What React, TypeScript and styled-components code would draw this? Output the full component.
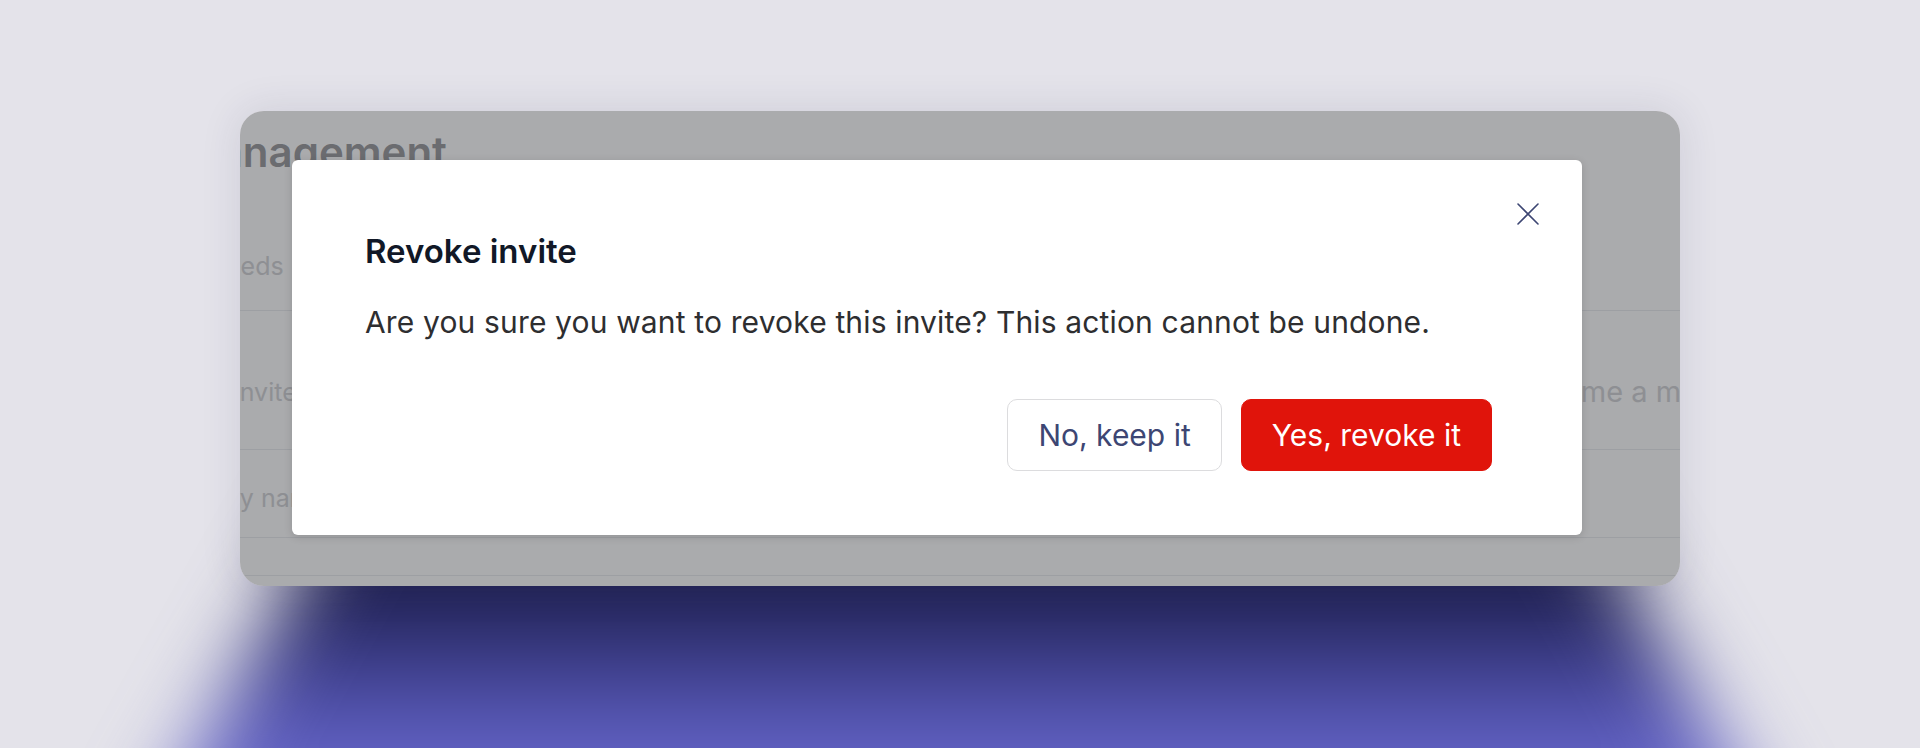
import styled, { createGlobalStyle } from "styled-components";

const GlobalStyle = createGlobalStyle`
  html, body {
    margin: 0;
    padding: 0;
  }
  body {
    background: #e4e3ea;
    font-family: Inter, "Noto Sans", "Liberation Sans", sans-serif;
    -webkit-font-smoothing: antialiased;
  }
  * {
    box-sizing: border-box;
  }
`;

const Stage = styled.div`
  position: relative;
  width: 1920px;
  height: 748px;
  overflow: hidden;
  display: flex;
  justify-content: center;
  align-items: flex-start;
  padding-top: 111px;
  background: #e4e3ea;
`;

// blurred indigo glow that sits behind the window
const Glow = styled.div`
  position: absolute;
  inset: 0;
  filter: blur(40px);
  pointer-events: none;
`;

const GlowShape = styled.div`
  position: absolute;
  top: 380px;
  bottom: -100px;
  left: 0;
  right: 0;
  clip-path: polygon(405px 0, 1515px 0, 1776px 100%, 144px 100%);
  background: linear-gradient(
    180deg,
    #17183c 0%,
    #1e1f4d 44%,
    #3e3f8e 61%,
    #6262c4 79%,
    #6b6bd0 100%
  );
`;

const Window = styled.div`
  position: relative;
  z-index: 1;
  width: 1440px;
  height: 475px;
  border-radius: 24px;
  overflow: hidden;
  background: #ffffff;
  box-shadow: 0 0 40px rgba(40, 40, 80, 0.12);
`;

const Page = styled.div`
  display: flex;
  flex-direction: column;
  padding-top: 16px;
`;

const PageTitle = styled.h1`
  margin: 0 0 0 -60px;
  font-size: 42px;
  line-height: 50px;
  font-weight: 600;
  color: #a1a1a4;
  white-space: nowrap;
`;

const Tabs = styled.div`
  display: flex;
  gap: 40px;
  margin-top: 73px;
  padding-bottom: 28px;
  border-bottom: 1px solid #ecedf0;
`;

const Tab = styled.span<{ $shift?: number }>`
  margin-left: ${(p) => (p.$shift ? `${p.$shift}px` : "0")};
  font-size: 25px;
  line-height: 32px;
  color: #d5d6d9;
  white-space: nowrap;
`;

const Row = styled.div<{ $top: number; $bottom: number }>`
  display: flex;
  align-items: center;
  padding: ${(p) => p.$top}px 0 ${(p) => p.$bottom}px;
  border-bottom: 1px solid #ecedf0;
  white-space: nowrap;
`;

const Cell = styled.span<{ $shift: number; $basis?: number }>`
  flex: 0 0 ${(p) => (p.$basis ? `${p.$basis}px` : "auto")};
  margin-left: ${(p) => p.$shift}px;
  font-size: 25px;
  line-height: 32px;
  color: #d5d6d9;
`;

const Hint = styled.span`
  flex: none;
  font-size: 29px;
  line-height: 32px;
  color: #d5d6d9;
`;

const Spacer = styled.div`
  height: 38px;
  border-bottom: 1px solid #ecedf0;
`;

const Overlay = styled.div`
  position: absolute;
  inset: 0;
  background: rgba(0, 2, 8, 0.335);
`;

const Dialog = styled.div`
  position: absolute;
  left: 52px;
  top: 49px;
  width: 1290px;
  padding: 71px 90px 64px 73px;
  background: #ffffff;
  border-radius: 6px;
  box-shadow: 0 2px 8px rgba(0, 0, 0, 0.14);
`;

const CloseButton = styled.button`
  position: absolute;
  top: 41px;
  right: 42px;
  width: 25px;
  height: 25px;
  padding: 0;
  border: none;
  background: transparent;
  display: flex;
  align-items: center;
  justify-content: center;
  cursor: pointer;
  color: #3d4673;
`;

const Title = styled.h2`
  margin: 0;
  font-size: 33px;
  line-height: 40px;
  font-weight: 600;
  color: #111827;
`;

const Message = styled.p`
  margin: 32px 0 0;
  font-size: 30px;
  line-height: 38px;
  letter-spacing: 0.15px;
  color: #2e2e30;
`;

const Footer = styled.div`
  display: flex;
  justify-content: flex-end;
  gap: 19px;
  margin-top: 58px;
`;

const Button = styled.button<{ $variant: "secondary" | "danger" }>`
  height: 72px;
  padding: 0 30px;
  border-radius: 10px;
  font-family: inherit;
  font-size: 30px;
  font-weight: 400;
  cursor: pointer;
  border: 1.5px solid ${(p) => (p.$variant === "danger" ? "#e0140b" : "#dcdcde")};
  background: ${(p) => (p.$variant === "danger" ? "#e0140b" : "#ffffff")};
  color: ${(p) => (p.$variant === "danger" ? "#ffffff" : "#3d4673")};
`;

const CloseIcon = () => (
  <svg width="22" height="22" viewBox="0 0 22 22" fill="none">
    <path d="M1 1L21 21M21 1L1 21" stroke="currentColor" strokeWidth="1.6" strokeLinecap="round" />
  </svg>
);

export default function App() {
  return (
    <>
      <GlobalStyle />
      <Stage>
        <Glow>
          <GlowShape />
        </Glow>
        <Window>
          <Page>
            <PageTitle>Management</PageTitle>
            <Tabs>
              <Tab $shift={-30}>Seeds</Tab>
              <Tab>Members</Tab>
            </Tabs>
            <Row $top={65} $bottom={41}>
              <Cell $shift={-7} $basis={1278}>
                Invite
              </Cell>
              <Hint>Become a member</Hint>
            </Row>
            <Row $top={32} $bottom={23}>
              <Cell $shift={-15}>by name</Cell>
            </Row>
            <Spacer />
          </Page>
          <Overlay />
          <Dialog role="dialog" aria-modal="true">
            <CloseButton aria-label="Close">
              <CloseIcon />
            </CloseButton>
            <Title>Revoke invite</Title>
            <Message>Are you sure you want to revoke this invite? This action cannot be undone.</Message>
            <Footer>
              <Button $variant="secondary">No, keep it</Button>
              <Button $variant="danger">Yes, revoke it</Button>
            </Footer>
          </Dialog>
        </Window>
      </Stage>
    </>
  );
}
